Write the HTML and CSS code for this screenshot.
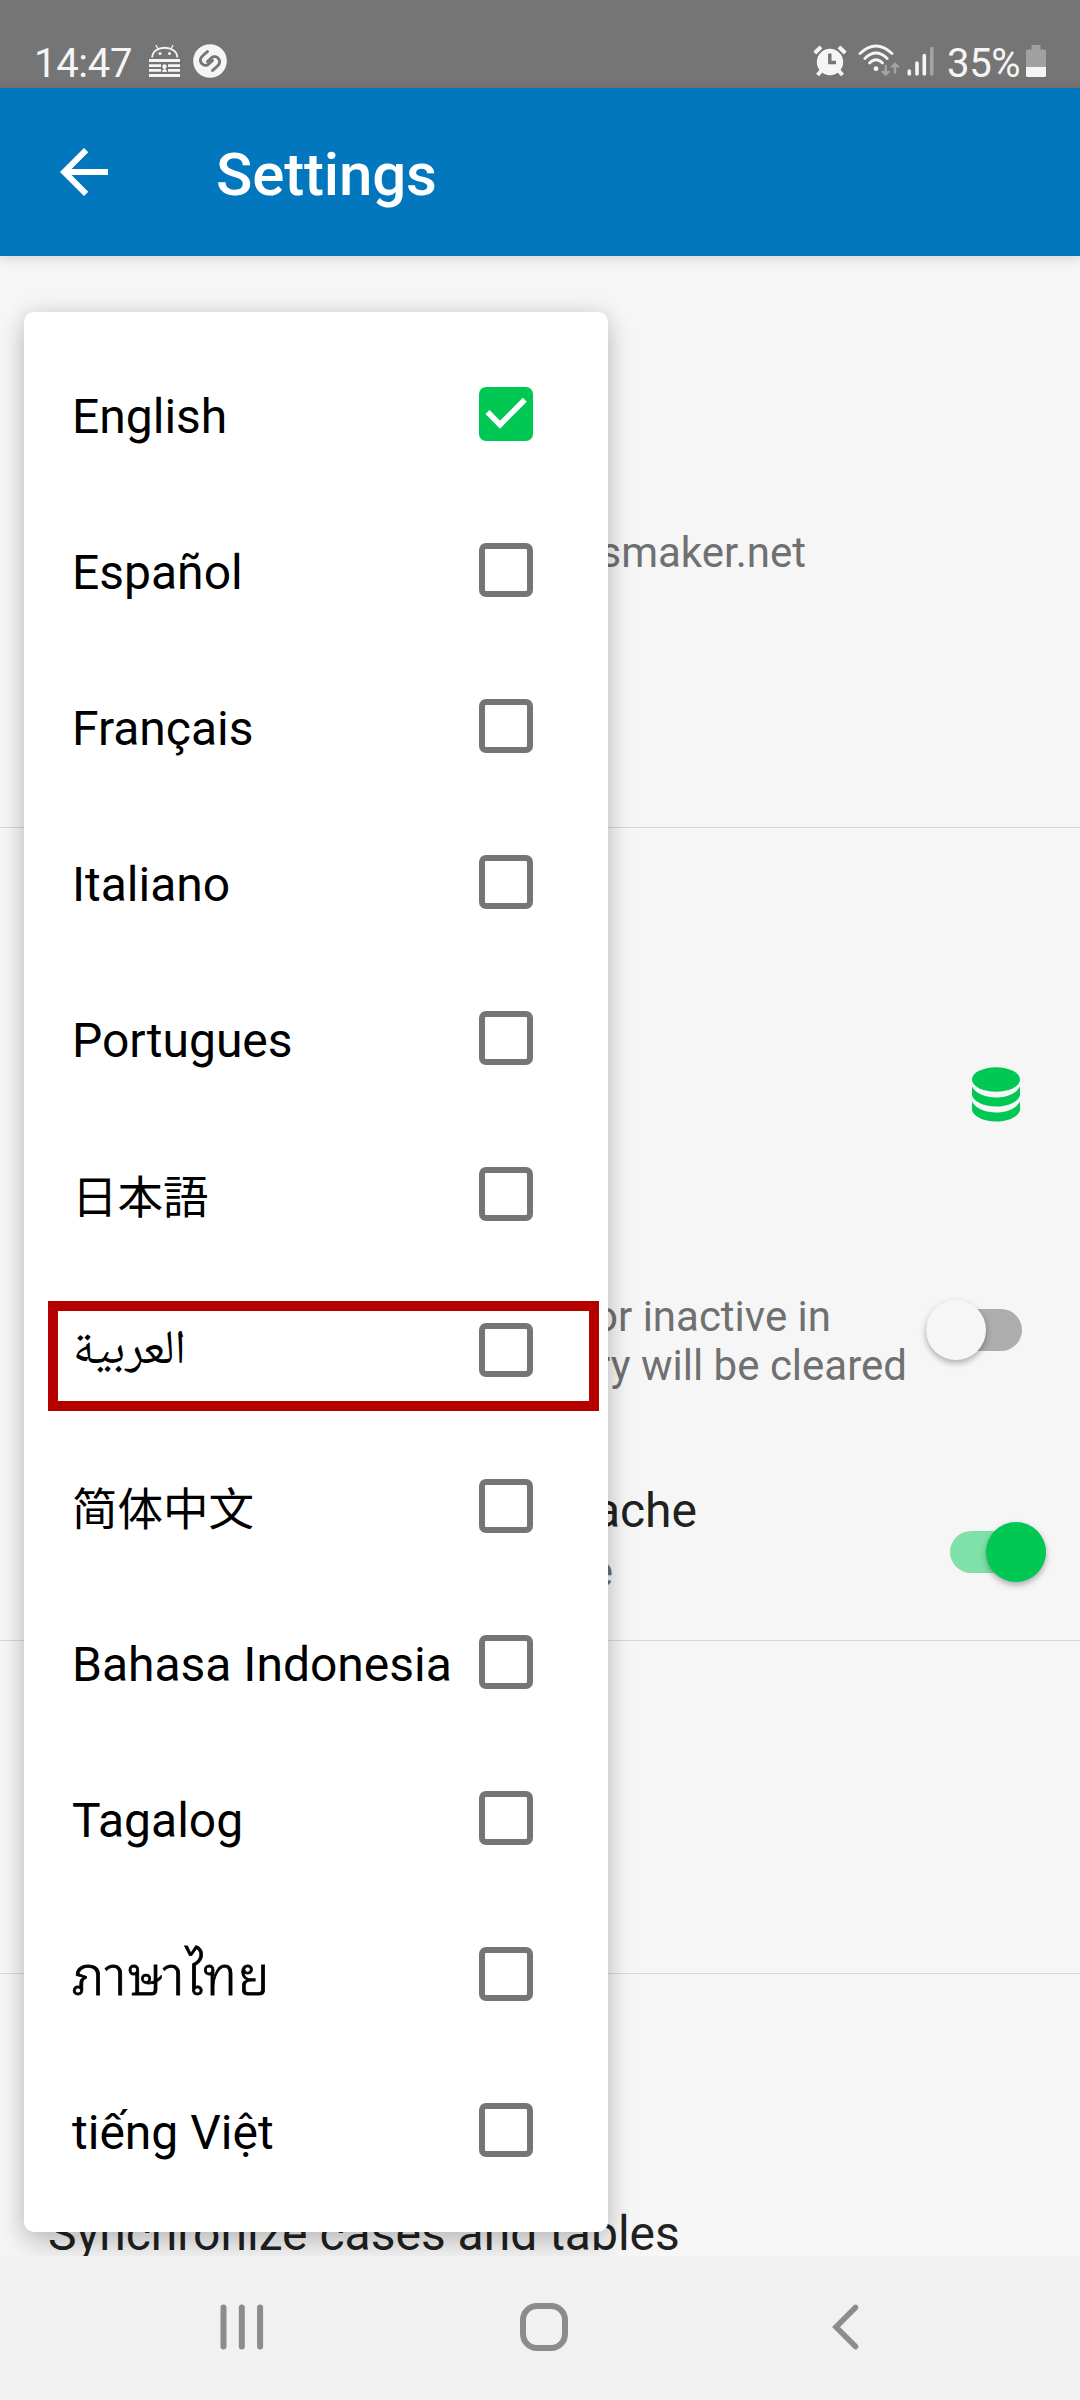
FILE: index.html
```html
<!DOCTYPE html>
<html lang="en">
<head>
<meta charset="utf-8">
<title>Settings</title>
<link rel="stylesheet" href="styles.css">
</head>
<body>
<div class="screen">
  <header class="status">
    <span class="time">14:47</span>
    <svg class="ic-android" width="32" height="34" viewBox="0 0 32 34">
      <g fill="none" stroke="#f5f5f5" stroke-width="1.8"><path d="M3.2 13.5C3.2 0.500 28.300 0.500 28.300 13.500"/><path d="M6.800 1l2.600 4.500M24.200 1l-2.600 4.500" stroke-width="1.300"/></g>
      <g fill="#f5f5f5"><circle cx="11" cy="9.500" r="1.500"/><circle cx="20.500" cy="9.500" r="1.500"/>
      <path d="M0 15h31v3H0zM0 20.300h12v2.700H0zM19 20.300h12v2.700H19zM0 25h12v2.700H0zM19 25h12v2.700H19zM0 30h31v3H0z"/><circle cx="15.500" cy="22.500" r="2.200"/><path d="M14.500 23h2v3h1.200v2h-4.400v-2h1.200z"/></g>
    </svg>
    <svg class="ic-note" width="34" height="34" viewBox="0 0 34 34">
      <circle cx="17" cy="17" r="16.800" fill="#f5f5f5"/>
      <g fill="none" stroke="#757575" stroke-width="3" stroke-linecap="round"><path d="M14.500 7.500L9.500 12C4 17 10.500 24 15.500 20.200L19.500 16.500"/><path d="M19.500 26.500L24.500 22C30 17 23.500 10 18.500 13.800L14.500 17.500"/></g>
    </svg>
    <svg class="ic-alarm" width="34" height="32" viewBox="0 0 34 32">
      <circle cx="17" cy="17" r="13.200" fill="#f5f5f5"/>
      <g stroke="#f5f5f5" stroke-width="4" fill="none"><path d="M1.800 8L8 1.800M26 1.800L32.200 8"/><path d="M9 25l-4.500 5M25 25l4.500 5"/></g>
      <path d="M16.800 8.500v9H23" fill="none" stroke="#757575" stroke-width="3.400"/>
    </svg>
    <svg class="ic-wifi" width="42" height="32" viewBox="0 0 42 32">
      <g fill="none" stroke="#f5f5f5" stroke-width="2.800" stroke-linecap="round"><path d="M2 9.500Q18 -5.500 34 9.500"/><path d="M6.800 14.500Q18 3.500 29.200 14.500"/><path d="M11.500 19Q18 12.500 24.500 19"/></g>
      <circle cx="18" cy="24.700" r="2.400" fill="#f5f5f5"/>
      <g fill="none" stroke="#a3a3a3" stroke-width="2.400"><path d="M27.700 21v9M24 27l3.700 3.700L31.400 27"/><path d="M37 29.500v-9M33.300 23.500L37 19.800l3.700 3.700"/></g>
    </svg>
    <svg class="ic-signal" width="28" height="32" viewBox="0 0 28 32">
      <g stroke-width="3.600" stroke-linecap="round" stroke="#f5f5f5"><path d="M2.300 26v3M10 18v11M17.300 10.500V29"/><path d="M24.800 3.500V29" stroke="#a3a3a3"/></g>
    </svg>
    <span class="pct">35%</span>
    <svg class="ic-batt" width="20" height="32" viewBox="0 0 20 32">
      <path d="M5.500 0h9v4.500H18.500Q20 4.500 20 6V22H0V6Q0 4.500 1.500 4.500H5.500z" fill="#a0a0a0"/><path d="M0 22h20v8.500Q20 32 18.500 32h-17Q0 32 0 30.500z" fill="#f5f5f5"/>
    </svg>
  </header>

  <div class="appbar">
    <svg width="72" height="72" viewBox="0 0 24 24"><path fill="#fff" d="M20 11H7.830l5.590-5.590L12 4l-8 8 8 8 1.410-1.410L7.830 13H20z"/></svg>
    <h1>Settings</h1>
  </div>

  <main class="content">
    <section class="sec account"><p class="sub w-site">smaker.net</p></section>
    <section class="sec cache">
      <div class="db-row">
        <svg width="48" height="56" viewBox="0 0 48 56" fill="#00c853"><ellipse cx="24" cy="12.500" rx="24" ry="12.200"/><path d="M0 19.500C4 27 14 30.500 24 30.500S44 27 48 19.500V28C47 34 37 39.500 24 39.500S1 34 0 28z"/><path d="M0 34.500C4 42 14 45.500 24 45.500S44 42 48 34.500V43C47 49 37 54.500 24 54.500S1 49 0 43z"/></svg>
      </div>
      <div class="set-row row-off">
        <p class="sub w-clear"><span class="l1">or inactive in</span><span>ry will be cleared</span></p>
        <span class="switch off"></span>
      </div>
      <div class="set-row row-on">
        <div class="w-ache"><p class="head">ache</p><p class="sub w-e">e</p></div>
        <span class="switch on"></span>
      </div>
    </section>
    <section class="sec blank"></section>
    <section class="sync"><p class="head">Synchronize cases and tables</p></section>

    <ul class="menu">
      <li><span>English</span><i class="box checked"><svg width="54" height="54" viewBox="0 0 54 54"><path d="M8.500 25L21 37.700L45.800 12.700" fill="none" stroke="#fff" stroke-width="5.600"/></svg></i></li>
      <li><span>Español</span><i class="box"></i></li>
      <li><span>Français</span><i class="box"></i></li>
      <li><span>Italiano</span><i class="box"></i></li>
      <li><span>Portugues</span><i class="box"></i></li>
      <li><span class="cjk" lang="ja">日本語</span><i class="box"></i></li>
      <li class="marked"><span class="arabic" lang="ar">العربية</span><i class="box"></i></li>
      <li><span class="cjk sc" lang="zh-Hans">简体中文</span><i class="box"></i></li>
      <li><span>Bahasa Indonesia</span><i class="box"></i></li>
      <li><span>Tagalog</span><i class="box"></i></li>
      <li><span class="thai" lang="th">ภาษาไทย</span><i class="box"></i></li>
      <li><span>tiếng Việt</span><i class="box"></i></li>
    </ul>
  </main>

  <nav class="navbar">
    <svg width="44" height="46" viewBox="0 0 44 46"><path d="M3.500 3.500v39M21.800 3.500v39M40.100 3.500v39" stroke="#8c8c8c" stroke-width="6" stroke-linecap="round"/></svg>
    <svg class="home" width="48" height="48" viewBox="0 0 48 48"><rect x="3" y="3" width="42" height="42" rx="14" fill="none" stroke="#8c8c8c" stroke-width="6"/></svg>
    <svg width="28" height="46" viewBox="0 0 28 46"><path d="M23.500 3.500L4 23l19.500 19.500" fill="none" stroke="#8c8c8c" stroke-width="5.600" stroke-linecap="round"/></svg>
  </nav>
</div>
</body>
</html>
```
FILE: styles.css
```css
*, *::before, *::after { box-sizing: border-box; margin: 0; padding: 0; }
body { width: 1080px; background: #f6f6f6; font-family: Roboto, "Noto Sans", sans-serif; }
svg { display: block; flex: none; }
.screen { width: 1080px; height: 2400px; display: flex; flex-direction: column; overflow: hidden; }

.status { height: 88px; flex: none; background: #757575; color: #f5f5f5; display: flex; align-items: flex-start; padding: 44px 34px 0 34px; font-size: 40px; line-height: 40px; }
.time { width: 115px; white-space: nowrap; letter-spacing: -0.3px; }
.ic-note { margin-left: 12px; }
.ic-alarm { margin: 1px 0 0 auto; }
.ic-wifi { margin: 0 0 0 11px; }
.ic-signal { margin: 1px 0 0 7px; }
.pct { margin-left: 12px; width: 79px; white-space: nowrap; letter-spacing: -0.3px; }
.ic-batt { margin-top: 1px; }

.appbar { height: 168px; flex: none; background: #0277bd; display: flex; align-items: center; padding-left: 48px; gap: 96px; position: relative; box-shadow: 0 2px 12px rgba(0,0,0,.16); z-index: 1; }
.appbar h1 { color: #fff; font-size: 60px; font-weight: 500; line-height: 70px; padding-top: 6px; letter-spacing: -0.15px; }

.content { height: 2000px; flex: none; position: relative; overflow: hidden; background: #f6f6f6; display: flex; flex-direction: column; }
.sec { border-bottom: 1px solid #d8d8d8; flex: none; }
.sub { font-size: 42px; line-height: 49px; color: #707070; text-align: right; white-space: nowrap; }
.head { font-size: 48px; line-height: 56px; color: #212121; text-align: right; white-space: nowrap; }
.account { height: 572px; padding-top: 272px; }
.w-site { width: 806px; }
.cache { height: 813px; padding-top: 239px; }
.db-row { display: flex; justify-content: flex-end; padding-right: 60px; }
.set-row { display: flex; justify-content: space-between; }
.row-off { padding: 169px 58px 0 0; }
.w-clear { width: 907px; display: flex; flex-direction: column; }
.w-clear .l1 { padding-right: 76px; }
.row-on { padding: 93px 34px 0 0; }
.w-ache { width: 697px; }
.w-e { width: 613px; padding-top: 8px; }
.switch { width: 96px; height: 42px; border-radius: 21px; display: flex; align-items: center; flex: none; }
.switch::before { content: ""; width: 60px; height: 60px; flex: none; border-radius: 50%; box-shadow: 0 3px 6px rgba(0,0,0,.3); }
.off { background: #adadad; margin-top: 17px; }
.off::before { background: #f6f6f6; }
.on { background: #7ee2a8; justify-content: flex-end; margin-top: 48px; }
.on::before { background: #00c853; }
.blank { height: 333px; }
.sync { padding: 232px 0 0 48px; }
.sync .head { text-align: left; }

.menu { position: absolute; left: 24px; top: 56px; width: 584px; height: 1920px; padding: 24px 0; background: #fff; border-radius: 10px; list-style: none; box-shadow: 0 14px 28px rgba(0,0,0,.17), 0 0 22px rgba(0,0,0,.12); }
.menu li { height: 156px; padding: 0 75px 0 48px; display: flex; align-items: center; justify-content: space-between; font-size: 48px; line-height: 56px; color: #000; white-space: nowrap; position: relative; }
.menu span { padding-top: 5px; }
.box { width: 54px; height: 54px; border: 6px solid #757575; border-radius: 7px; flex: none; }
.checked { border: 0; background: #00c853; }
.menu .cjk { font-family: "Noto Sans CJK JP", sans-serif; font-size: 45.500px; padding: 0 0 1px; }
.menu .sc { font-family: "Noto Sans CJK SC", sans-serif; }
.menu .arabic { font-family: "Noto Naskh Arabic", "Noto Sans Arabic", "DejaVu Sans", sans-serif; padding-left: 1px; }
.menu .thai { font-family: "Noto Sans Thai Looped", "Droid Sans Thai", Loma, Waree, Garuda, "Noto Serif Thai", sans-serif; font-size: 53px; font-weight: 300; -webkit-text-stroke: 0.8px #000; letter-spacing: 0.8px; padding: 0 0 5px; }
/* frame around the highlighted language */
.marked::after { content: ""; position: absolute; left: 24px; top: 29px; width: 551px; height: 110px; border: 10px solid #b50000; }

.navbar { height: 144px; flex: none; background: #f1f1f1; display: flex; justify-content: space-between; align-items: center; padding: 0 220px 2px; }
.navbar .home { margin-right: 8px; }
```
